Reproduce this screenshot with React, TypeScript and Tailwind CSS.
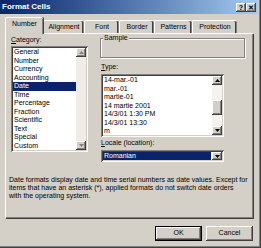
import React from "react";

const font = "font-['Tahoma','Liberation_Sans',sans-serif]";

const raised =
	"shadow-[inset_-1px_-1px_0_#404040,inset_1px_1px_0_#ffffff,inset_-2px_-2px_0_#808080]";
const sunken =
	"shadow-[inset_1px_1px_0_#808080,inset_-1px_-1px_0_#ffffff,inset_2px_2px_0_#404040,inset_-2px_-2px_0_#d4d0c8]";

const categories = [
	"General",
	"Number",
	"Currency",
	"Accounting",
	"Date",
	"Time",
	"Percentage",
	"Fraction",
	"Scientific",
	"Text",
	"Special",
	"Custom",
];

const types = [
	"14-mar.-01",
	"mar.-01",
	"martie-01",
	"14 martie 2001",
	"14/3/01 1:30 PM",
	"14/3/01 13:30",
	"m",
];

const tabs = [
	{ label: "Number", w: "w-[38px]" },
	{ label: "Alignment", w: "w-[41px]" },
	{ label: "Font", w: "w-[35px]" },
	{ label: "Border", w: "w-[35px]" },
	{ label: "Patterns", w: "w-[38px]" },
	{ label: "Protection", w: "w-[45px]" },
];

const Arrow: React.FC<{ down?: boolean; muted?: boolean }> = ({ down, muted }) => (
	<div className={`w-[10px] h-[9px] bg-[#d4d0c8] flex items-center justify-center ${raised}`}>
		<svg width="5" height="3" viewBox="0 0 5 3">
			<polygon
				points={down ? "0,0 5,0 2.5,3" : "0,3 5,3 2.5,0"}
				fill={muted ? "#808080" : "#000000"}
			/>
		</svg>
	</div>
);

const App: React.FC = () => {
	return (
		<div
			className={`w-[261px] h-[248px] bg-[#d4d0c8] flex flex-col text-black text-[7px] ${font} shadow-[inset_-1px_-1px_0_#404040,inset_-2px_-2px_0_#808080]`}
		>
			{/* title bar */}
			<div className="h-[14px] w-[258px] flex items-center bg-gradient-to-r from-[#0a246a] to-[#a6caf0] pl-[2px] pr-[2px]">
				<span className="text-white font-bold text-[8px] leading-none flex-1">Format Cells</span>
				<div className={`w-[10px] h-[9px] bg-[#d4d0c8] flex items-center justify-center text-[7px] font-bold leading-none ${raised}`}>
					?
				</div>
				<div className={`w-[10px] h-[9px] bg-[#d4d0c8] flex items-center justify-center text-[7px] font-bold leading-none ${raised}`}>
					✕
				</div>
			</div>

			{/* tabs */}
			<div className="mt-[3px] ml-[5px] h-[16px] flex items-end">
				{tabs.map((t, i) =>
					i === 0 ? (
						<div
							key={t.label}
							className={`${t.w} h-[17px] -mb-[1px] relative z-10 bg-[#d4d0c8] border-l border-t border-white rounded-tl-[2px] rounded-tr-[2px] shadow-[inset_-1px_0_0_#808080,1px_0_0_#404040] flex items-center justify-center pb-[3px]`}
						>
							{t.label}
						</div>
					) : (
						<div
							key={t.label}
							className={`${t.w} h-[13px] bg-[#d4d0c8] border-l border-t border-white rounded-tl-[2px] rounded-tr-[2px] shadow-[inset_-1px_0_0_#808080,inset_-2px_0_0_#404040] flex items-center justify-center pt-[1px]`}
						>
							{t.label}
						</div>
					),
				)}
			</div>

			{/* panel */}
			<div className="ml-[5px] w-[248px] h-[185px] border-l border-t border-white shadow-[inset_-1px_-1px_0_#808080,1px_1px_0_#404040] flex flex-col">
				<div className="flex pl-[5px] pt-[2px]">
					{/* category */}
					<div className="w-[77px] flex flex-col">
						<div className="h-[8px] leading-[8px]">
							<span className="underline">C</span>ategory:
						</div>
						<div className={`mt-[2px] h-[106px] bg-white p-[2px] flex ${sunken}`}>
							<div className="flex-1 flex flex-col">
								{categories.map((c) => (
									<div
										key={c}
										className={`h-[8.5px] leading-[8.5px] pl-[1px] whitespace-nowrap ${
											c === "Date" ? "bg-[#0a246a] text-white" : "text-black"
										}`}
									>
										{c}
									</div>
								))}
							</div>
							<div className="w-[10px] flex flex-col bg-[#eeede8]">
								<Arrow muted />
								<div className="flex-1" />
								<Arrow down muted />
							</div>
						</div>
					</div>

					{/* right column */}
					<div className="ml-[12px] w-[145px] flex flex-col">
						<div className="mt-[2px] h-[20px] border border-[#808080] shadow-[inset_1px_1px_0_#ffffff,1px_1px_0_#ffffff] flex flex-col">
							<div className="-mt-[5px] ml-[2px] px-[1px] self-start bg-[#d4d0c8] h-[8px] leading-[8px]">Sample</div>
						</div>
						<div className="mt-[5px] ml-[1px] h-[8px] leading-[8px]">
							<span className="underline">T</span>ype:
						</div>
						<div className={`mt-[3px] w-[123px] ml-[1px] h-[63px] bg-white p-[2px] flex ${sunken}`}>
							<div className="flex-1 flex flex-col pl-[1px] text-black">
								{types.map((t) => (
									<div key={t} className="h-[8.5px] leading-[8.5px] whitespace-nowrap">
										{t}
									</div>
								))}
							</div>
							<div className="w-[10px] flex flex-col bg-[#f4f3ef]">
								<Arrow />
								<div className="h-[15px]" />
								<div className={`h-[15px] bg-[#d4d0c8] ${raised}`} />
								<div className="flex-1" />
								<Arrow down />
							</div>
						</div>
						<div className="mt-[2px] ml-[1px] h-[8px] leading-[8px]">
							<span className="underline">L</span>ocale (location):
						</div>
						<div className={`mt-[3px] w-[123px] ml-[1px] h-[12px] bg-white p-[2px] flex ${sunken}`}>
							<div className="flex-1 pr-[1px]">
								<div className="h-full bg-[#0a246a] text-white leading-[8px] pl-[1px]">Romanian</div>
							</div>
							<div className={`w-[10px] bg-[#d4d0c8] flex items-center justify-center ${raised}`}>
								<svg width="5" height="3" viewBox="0 0 5 3">
									<polygon points="0,0 5,0 2.5,3" fill="#000000" />
								</svg>
							</div>
						</div>
					</div>
				</div>

				<div className="mt-[14px] ml-[3px] text-[7px] leading-[8px] whitespace-nowrap">
					Date formats display date and time serial numbers as date values. Except for
					<br />
					items that have an asterisk (*), applied formats do not switch date orders
					<br />
					with the operating system.
				</div>
			</div>

			{/* buttons */}
			<div className="mt-[8px] w-[253px] flex justify-end gap-[4px]">
				<div className="w-[47px] h-[15px] border border-black flex">
					<div className={`flex-1 bg-[#d4d0c8] flex items-center justify-center ${raised}`}>OK</div>
				</div>
				<div className={`w-[47px] h-[15px] bg-[#d4d0c8] flex items-center justify-center ${raised}`}>Cancel</div>
			</div>
		</div>
	);
};

export default App;
